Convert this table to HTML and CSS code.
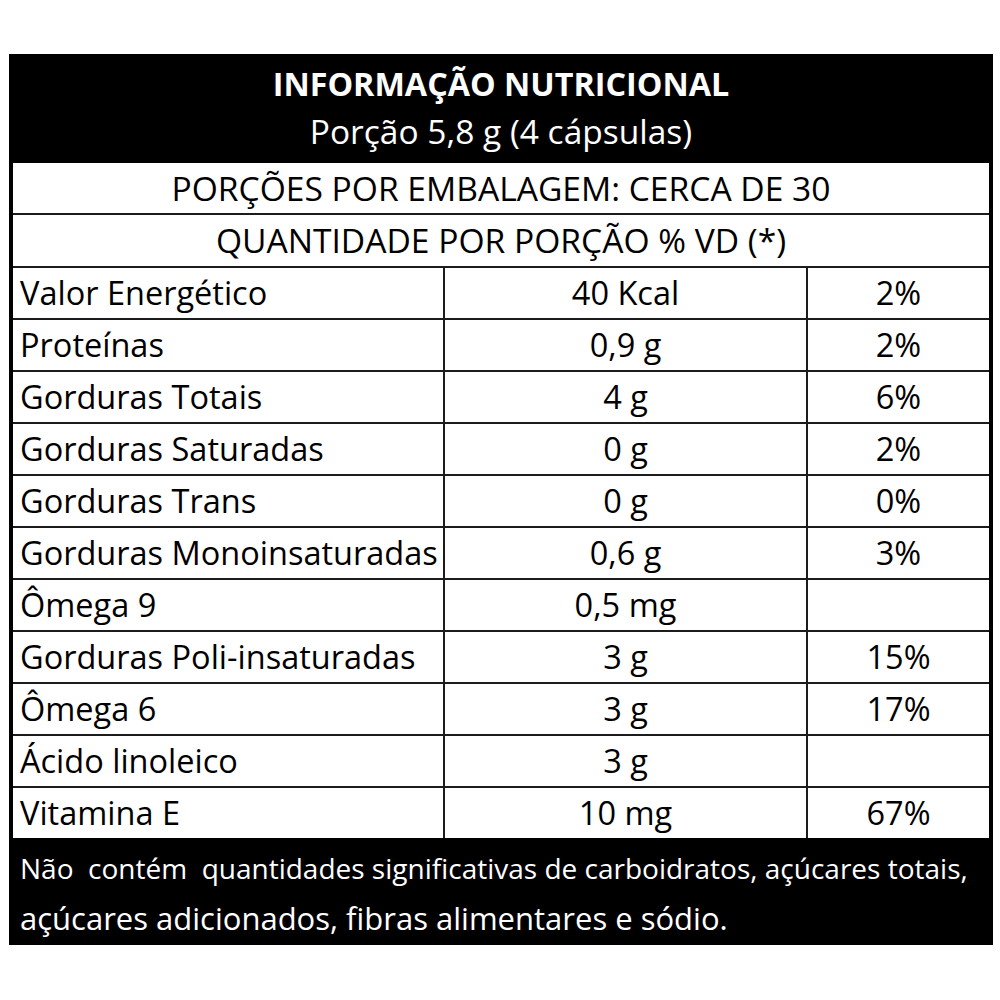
FILE: index.html
```html
<!DOCTYPE html>
<html lang="pt">
<head>
<meta charset="utf-8">
<title>Informação Nutricional</title>
<link rel="stylesheet" href="styles.css">
</head>
<body>
<div class="label">
  <div class="header">
    <div class="title">INFORMAÇÃO NUTRICIONAL</div>
    <div class="subtitle">Porção 5,8 g (4 cápsulas)</div>
  </div>
  <div class="band band-first">PORÇÕES POR EMBALAGEM: CERCA DE 30</div>
  <div class="band band-second">QUANTIDADE POR PORÇÃO % VD (*)</div>
  <div class="rows">
    <div class="row"><div class="c name">Valor Energético</div><div class="c qty">40 Kcal</div><div class="c vd">2%</div></div>
    <div class="row"><div class="c name">Proteínas</div><div class="c qty">0,9 g</div><div class="c vd">2%</div></div>
    <div class="row"><div class="c name">Gorduras Totais</div><div class="c qty">4 g</div><div class="c vd">6%</div></div>
    <div class="row"><div class="c name">Gorduras Saturadas</div><div class="c qty">0 g</div><div class="c vd">2%</div></div>
    <div class="row"><div class="c name">Gorduras Trans</div><div class="c qty">0 g</div><div class="c vd">0%</div></div>
    <div class="row"><div class="c name">Gorduras Monoinsaturadas</div><div class="c qty">0,6 g</div><div class="c vd">3%</div></div>
    <div class="row"><div class="c name">Ômega 9</div><div class="c qty">0,5 mg</div><div class="c vd"></div></div>
    <div class="row"><div class="c name">Gorduras Poli-insaturadas</div><div class="c qty">3 g</div><div class="c vd">15%</div></div>
    <div class="row"><div class="c name">Ômega 6</div><div class="c qty">3 g</div><div class="c vd">17%</div></div>
    <div class="row"><div class="c name">Ácido linoleico</div><div class="c qty">3 g</div><div class="c vd"></div></div>
    <div class="row"><div class="c name">Vitamina E</div><div class="c qty">10 mg</div><div class="c vd">67%</div></div>
  </div>
  <div class="footer">
    <div class="fline">Não&nbsp; contém&nbsp; quantidades significativas de carboidratos, açúcares totais,</div>
    <div class="fline fline-second">açúcares adicionados, fibras alimentares e sódio.</div>
  </div>
</div>
</body>
</html>
```
FILE: styles.css
```css
* { box-sizing: border-box; }
html, body { margin: 0; padding: 0; background: #fff; }
body {
  font-family: "Open Sans", "Noto Sans", "Liberation Sans", sans-serif;
  color: #000;
}
.label {
  margin: 54px 0 0 9px;
  width: 984px;
  border: 4px solid #000;
  background: #fff;
}
.header {
  background: #000;
  color: #fff;
  height: 105px;
  display: flex;
  flex-direction: column;
  align-items: center;
  padding-top: 2px;
}
.title {
  font-weight: 700;
  font-size: 32.3px;
  line-height: 46px;
  white-space: nowrap;
}
.subtitle {
  font-size: 33.5px;
  line-height: 50px;
  white-space: nowrap;
}
.band {
  text-align: center;
  font-size: 33.6px;
  white-space: nowrap;
}
.band-first { height: 50px; line-height: 50px; }
.band-second { height: 53px; line-height: 51px; border-top: 2px solid #1c1c1c; }
.row {
  display: grid;
  grid-template-columns: 430px 363px 1fr;
  height: 52px;
  border-top: 2px solid #1c1c1c;
}
.c {
  font-size: 32.5px;
  line-height: 50px;
  white-space: nowrap;
}
.name { padding-left: 7px; }
.qty, .vd { text-align: center; border-left: 2px solid #1c1c1c; }
.footer {
  background: #000;
  color: #fff;
  height: 103px;
  padding: 6px 0 0 7px;
}
.fline {
  font-size: 28px;
  line-height: 49px;
  white-space: nowrap;
}
.fline-second {
  font-size: 31px;
  line-height: 51px;
}
```
